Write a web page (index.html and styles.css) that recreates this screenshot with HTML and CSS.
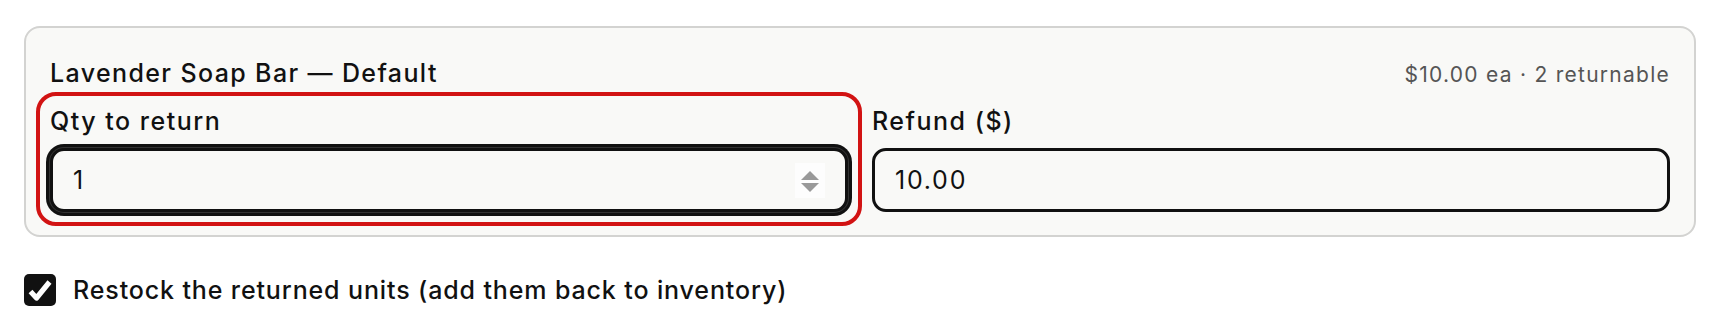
FILE: index.html
```html
<!DOCTYPE html>
<html lang="en">
<head>
    <meta charset="UTF-8">
    <meta name="viewport" content="width=device-width, initial-scale=1.0">
    <title>Return Item</title>
    <link rel="stylesheet" href="styles.css">
</head>
<body>
    <div class="return-line">
        <div class="line-head">
            <span class="line-name">Lavender Soap Bar — Default</span>
            <span class="line-meta">$10.00 ea · 2 returnable</span>
        </div>
        <div class="line-fields">
            <div class="field field-error">
                <label class="field-label" for="qty">Qty to return</label>
                <div class="input-box input-focus">
                    <input class="field-input" id="qty" type="text" value="1">
                    <span class="spinner">
                        <svg width="20" height="28" viewBox="0 0 20 28">
                            <polygon points="10,5 19,14 1,14" fill="#999"/>
                            <polygon points="1,17 19,17 10,26" fill="#999"/>
                        </svg>
                    </span>
                </div>
            </div>
            <div class="field">
                <label class="field-label" for="refund">Refund ($)</label>
                <div class="input-box">
                    <input class="field-input" id="refund" type="text" value="10.00">
                </div>
            </div>
        </div>
    </div>

    <label class="restock">
        <span class="checkbox">
            <svg width="32" height="32" viewBox="0 0 32 32">
                <polyline points="6.5,17.5 12.5,24 25.5,8" fill="none" stroke="#fff" stroke-width="5.2" stroke-linejoin="round"/>
            </svg>
        </span>
        Restock the returned units (add them back to inventory)
    </label>
</body>
</html>
```

FILE: styles.css
```css
body {
    font-family: Inter, "Noto Sans", sans-serif;
    color: #111;
    background-color: #fff;
    margin: 0;
    padding: 26px 24px;
}
.return-line {
    background-color: #f9f9f7;
    border: 2px solid #d3d3d1;
    border-radius: 16px;
    padding: 30px 24px 23px;
}
.line-head {
    display: flex;
    justify-content: space-between;
    align-items: baseline;
    margin-bottom: 18px;
}
.line-name {
    font-size: 25px;
    line-height: 30px;
    font-weight: 500;
    letter-spacing: 0.055em;
}
.line-meta {
    font-size: 21px;
    color: #555;
    letter-spacing: 0.06em;
}
.line-fields {
    display: grid;
    grid-template-columns: 1fr 1fr;
    gap: 24px;
}
.field {
    display: flex;
    flex-direction: column;
    border-radius: 6px;
}
.field-error {
    outline: 4px solid #d21313;
    outline-offset: 10px;
}
.field-label {
    font-size: 25px;
    line-height: 30px;
    font-weight: 500;
    letter-spacing: 0.06em;
    margin-bottom: 12px;
}
.input-box {
    display: flex;
    align-items: center;
    height: 64px;
    box-sizing: border-box;
    border: 3px solid #111;
    border-radius: 14px;
    padding: 0 20px;
    background-color: #f9f9f7;
}
.input-focus {
    box-shadow: 0 0 0 1px #333, 0 0 0 4px #111;
}
.field-input {
    flex: 1;
    min-width: 0;
    border: none;
    outline: none;
    background: transparent;
    font-family: inherit;
    font-size: 25px;
    letter-spacing: 0.07em;
    color: #111;
    padding: 0;
}
.spinner {
    display: flex;
    align-items: center;
    justify-content: center;
    width: 30px;
    height: 35px;
    background-color: #fdfdfd;
}
.restock {
    display: flex;
    align-items: center;
    gap: 17px;
    margin-top: 37px;
    font-size: 25px;
    font-weight: 500;
    letter-spacing: 0.035em;
}
.checkbox {
    display: flex;
    width: 32px;
    height: 32px;
    background-color: #111;
    border-radius: 5px;
}
```
